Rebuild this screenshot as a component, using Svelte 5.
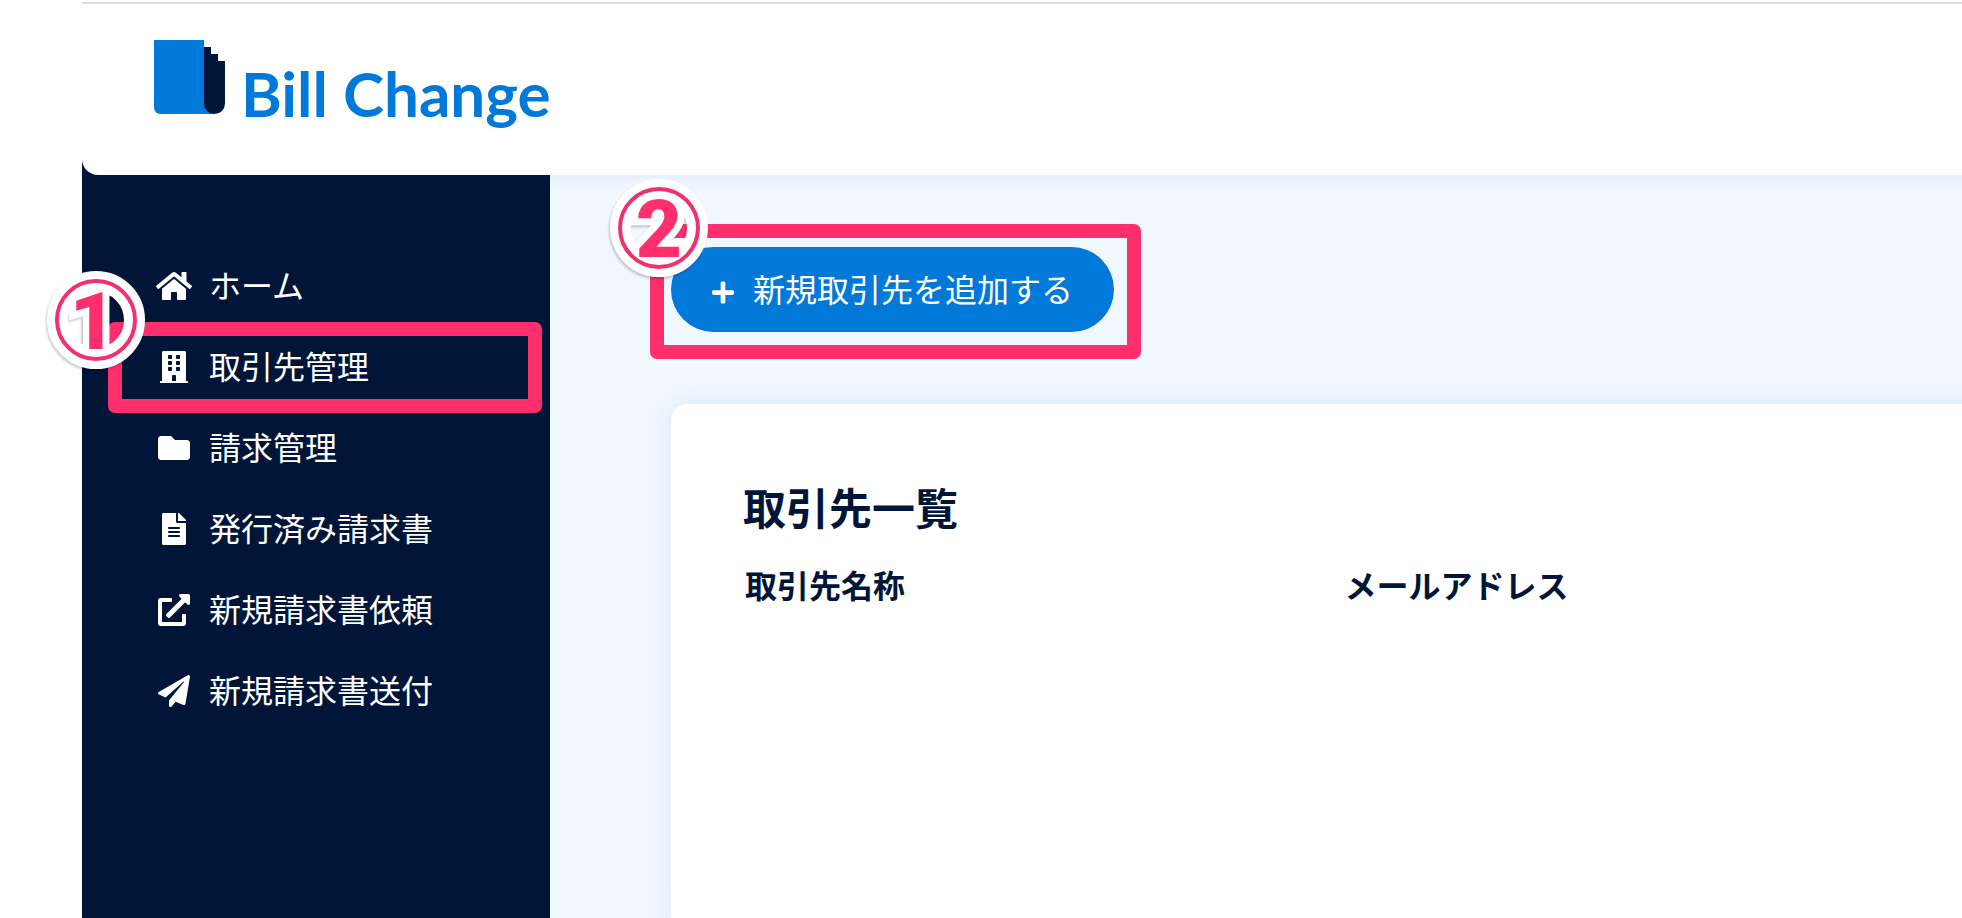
<script>
  const navItems = [
    {
      label: 'ホーム',
      width: 576,
      path: 'M280.37 148.26L96 300.11V464a16 16 0 0 0 16 16l112.06-.29a16 16 0 0 0 15.92-16V368a16 16 0 0 1 16-16h64a16 16 0 0 1 16 16v95.64a16 16 0 0 0 16 16.05L464 480a16 16 0 0 0 16-16V300L295.67 148.26a12.19 12.19 0 0 0-15.3 0zM571.6 251.47L488 182.56V44.05a12 12 0 0 0-12-12h-56a12 12 0 0 0-12 12v72.61L318.47 43a48 48 0 0 0-61 0L4.34 251.47a12 12 0 0 0-1.6 16.9l25.5 31A12 12 0 0 0 45.15 301l235.22-193.74a12.19 12.19 0 0 1 15.3 0L530.9 301a12 12 0 0 0 16.9-1.6l25.5-31a12 12 0 0 0-1.7-16.93z'
    },
    {
      label: '取引先管理',
      width: 448,
      step: '1',
      path: 'M436 480h-20V24c0-13.255-10.745-24-24-24H56C42.745 0 32 10.745 32 24v456H12c-6.627 0-12 5.373-12 12v20h448v-20c0-6.627-5.373-12-12-12zM128 76c0-6.627 5.373-12 12-12h40c6.627 0 12 5.373 12 12v40c0 6.627-5.373 12-12 12h-40c-6.627 0-12-5.373-12-12V76zm0 96c0-6.627 5.373-12 12-12h40c6.627 0 12 5.373 12 12v40c0 6.627-5.373 12-12 12h-40c-6.627 0-12-5.373-12-12v-40zm52 148h-40c-6.627 0-12-5.373-12-12v-40c0-6.627 5.373-12 12-12h40c6.627 0 12 5.373 12 12v40c0 6.627-5.373 12-12 12zm76 160h-64v-84c0-6.627 5.373-12 12-12h40c6.627 0 12 5.373 12 12v84zm64-172c0 6.627-5.373 12-12 12h-40c-6.627 0-12-5.373-12-12v-40c0-6.627 5.373-12 12-12h40c6.627 0 12 5.373 12 12v40zm0-96c0 6.627-5.373 12-12 12h-40c-6.627 0-12-5.373-12-12v-40c0-6.627 5.373-12 12-12h40c6.627 0 12 5.373 12 12v40zm0-96c0 6.627-5.373 12-12 12h-40c-6.627 0-12-5.373-12-12V76c0-6.627 5.373-12 12-12h40c6.627 0 12 5.373 12 12v40z'
    },
    {
      label: '請求管理',
      width: 512,
      path: 'M464 128H272l-64-64H48C21.49 64 0 85.49 0 112v288c0 26.51 21.49 48 48 48h416c26.51 0 48-21.49 48-48V176c0-26.51-21.49-48-48-48z'
    },
    {
      label: '発行済み請求書',
      width: 384,
      path: 'M224 136V0H24C10.7 0 0 10.7 0 24v464c0 13.3 10.7 24 24 24h336c13.3 0 24-10.7 24-24V160H248c-13.2 0-24-10.8-24-24zm64 236c0 6.6-5.4 12-12 12H108c-6.6 0-12-5.4-12-12v-8c0-6.6 5.4-12 12-12h168c6.6 0 12 5.4 12 12v8zm0-64c0 6.6-5.4 12-12 12H108c-6.6 0-12-5.4-12-12v-8c0-6.6 5.4-12 12-12h168c6.6 0 12 5.4 12 12v8zm0-72v8c0 6.6-5.4 12-12 12H108c-6.6 0-12-5.4-12-12v-8c0-6.6 5.4-12 12-12h168c6.6 0 12 5.4 12 12zm96-114.1v6.1H256V0h6.1c6.4 0 12.5 2.5 17 7l97.9 98c4.5 4.5 7 10.6 7 16.9z'
    },
    {
      label: '新規請求書依頼',
      width: 512,
      path: 'M432,320H400a16,16,0,0,0-16,16V448H64V128H208a16,16,0,0,0,16-16V80a16,16,0,0,0-16-16H48A48,48,0,0,0,0,112V464a48,48,0,0,0,48,48H400a48,48,0,0,0,48-48V336A16,16,0,0,0,432,320ZM488,0h-128c-21.37,0-32.05,25.91-17,41l35.73,35.73L135,320.37a24,24,0,0,0,0,34L157.67,377a24,24,0,0,0,34,0L435.28,133.32,471,169c15,15,41,4.5,41-17V24A24,24,0,0,0,488,0Z'
    },
    {
      label: '新規請求書送付',
      width: 512,
      path: 'M476 3.2L12.5 270.6c-18.1 10.4-15.8 35.6 2.2 43.2L121 358.4l287.3-253.2c5.5-4.9 13.3 2.6 8.6 8.3L176 407v80.5c0 23.6 28.5 32.9 42.5 15.8L282 426l124.6 52.2c14.2 6 30.4-2.9 33-18.2l72-432C515 7.8 493.3-6.8 476 3.2z'
    }
  ];
</script>

{#snippet marker(step)}
  <span class="frame"></span>
  <svg class="badge" viewBox="-49 -49 98 98">
    <circle r="38.5" fill="none" stroke="#fff" stroke-width="21" />
    <text class="digit" x={step === '1' ? -3 : 0} y="29" text-anchor="middle">{step}</text>
    <circle r="39" fill="none" stroke="#f0316d" stroke-width="4" />
  </svg>
{/snippet}

<div class="shell">
  <header>
    <a class="brand" href="#home">
      <svg class="mark" viewBox="0 0 71 74" aria-hidden="true">
        <path fill="#0079d9" d="M0 0h50v60l10 14H7q-7 0-7-7z" />
        <path fill="#001538" d="M50 7h7v7h7v7h7v42.500a10.500 10.500 0 0 1-21 0z" />
      </svg>
      <span class="name">Bill Change</span>
    </a>
  </header>

  <div class="body">
    <nav>
      <ul>
        {#each navItems as item}
          <li>
            <a href="#nav">
              <span class="icon">
                <svg viewBox="0 0 {item.width} 512" aria-hidden="true"><path d={item.path} /></svg>
              </span>
              <span class="label">{item.label}</span>
            </a>
            {#if item.step}{@render marker(item.step)}{/if}
          </li>
        {/each}
      </ul>
    </nav>

    <main>
      <div class="action">
        <button type="button">
          <svg viewBox="0 0 448 512" aria-hidden="true">
            <path d="M416 208H272V64c0-17.67-14.33-32-32-32h-32c-17.67 0-32 14.33-32 32v144H32c-17.67 0-32 14.33-32 32v32c0 17.67 14.33 32 32 32h144v144c0 17.67 14.33 32 32 32h32c17.67 0 32-14.33 32-32V304h144c17.67 0 32-14.33 32-32v-32c0-17.67-14.33-32-32-32z" />
          </svg>
          <span class="label">新規取引先を追加する</span>
        </button>
        {@render marker('2')}
      </div>

      <section>
        <h1>取引先一覧</h1>
        <table>
          <thead>
            <tr>
              <th scope="col">取引先名称</th>
              <th scope="col">メールアドレス</th>
            </tr>
          </thead>
        </table>
      </section>
    </main>
  </div>
</div>

<style>
  :global(body) {
    background: #fff;
    overflow: hidden;
  }

  .shell {
    box-sizing: border-box;
    height: 100vh;
    padding: 2px 0 0 82px;
    display: flex;
    flex-direction: column;
    overflow: hidden;
    color: #001538;
    font-family: 'Noto Sans CJK JP', sans-serif;
    font-size: 32px;
    line-height: 48px;
  }

  a {
    color: inherit;
    text-decoration: none;
  }

  /* Bleeds past the right edge so the shadow stays even across the page. */
  header {
    position: relative;
    flex: none;
    box-sizing: border-box;
    height: 173px;
    margin-right: -40px;
    padding: 36px 72px 0;
    background: #fff;
    border-top: 2px solid #dcdcde;
    border-bottom-left-radius: 16px;
    box-shadow: 0 0 20px rgba(0, 60, 140, 0.08);
    clip-path: inset(0 0 -30px 0);
    z-index: 1;
  }

  .brand {
    display: flex;
    align-items: flex-start;
    gap: 16px;
  }

  .mark {
    width: 71px;
    height: 74px;
  }

  .name {
    color: #0079d9;
    font-family: Lato, sans-serif;
    font-size: 62px;
    font-weight: 700;
    line-height: 106px;
    white-space: nowrap;
  }

  .body {
    flex: 1;
    display: flex;
    margin-top: -16px;
    min-height: 0;
  }

  nav {
    flex: none;
    width: 468px;
    padding-top: 86px;
    background: #001538;
    color: #fff;
    box-sizing: border-box;
  }

  ul {
    margin: 0;
    padding: 0;
    list-style: none;
  }

  li {
    position: relative;
  }

  li a {
    display: flex;
    align-items: center;
    gap: 17px;
    height: 81px;
    padding-left: 74px;
  }

  .icon {
    width: 36px;
    display: flex;
    justify-content: center;
  }

  .icon svg {
    height: 32px;
    fill: currentColor;
  }

  .label {
    padding-bottom: 4px;
  }

  main {
    flex: 1;
    min-width: 0;
    padding: 88px 0 0 121px;
    background: #f0f7ff;
    display: flex;
    flex-direction: column;
    align-items: flex-start;
    gap: 72px;
  }

  .action {
    position: relative;
    z-index: 2;
  }

  button {
    display: flex;
    align-items: center;
    gap: 19px;
    height: 85px;
    padding: 0 41px;
    border: 0;
    border-radius: 43px;
    background: #0079d9;
    color: #fff;
    font: inherit;
    white-space: nowrap;
  }

  button svg {
    width: 22px;
    margin-top: 6px;
    fill: currentColor;
  }

  .frame {
    position: absolute;
    border: 14px solid #ff2f6d;
    border-radius: 7px;
    pointer-events: none;
  }

  li .frame {
    inset: -4px 8px -6px 26px;
  }

  .action .frame {
    inset: -23px -27px -27px -21px;
  }

  .badge {
    position: absolute;
    width: 98px;
    height: 98px;
    overflow: visible;
    filter: drop-shadow(-1px 2px 1px rgba(0, 0, 0, 0.2));
    pointer-events: none;
  }

  li .badge {
    left: -35px;
    top: -55px;
  }

  .action .badge {
    left: -61px;
    top: -68px;
  }

  .digit {
    fill: #ff2f6d;
    stroke: #fff;
    stroke-width: 14px;
    paint-order: stroke;
    font-family: Roboto, sans-serif;
    font-size: 80px;
    font-weight: 900;
  }

  section {
    flex: 1;
    align-self: stretch;
    margin-right: -40px;
    padding: 70px 60px 0 72px;
    border-top-left-radius: 16px;
    background: #fff;
    box-shadow: 0 0 24px rgba(0, 60, 140, 0.08);
  }

  h1 {
    margin: 0;
    font-size: 43px;
    font-weight: 700;
    line-height: 64px;
  }

  table {
    width: 100%;
    margin-top: 22px;
    border-collapse: collapse;
    table-layout: fixed;
  }

  th {
    padding: 0 2px;
    font-weight: 700;
    text-align: left;
  }
</style>
